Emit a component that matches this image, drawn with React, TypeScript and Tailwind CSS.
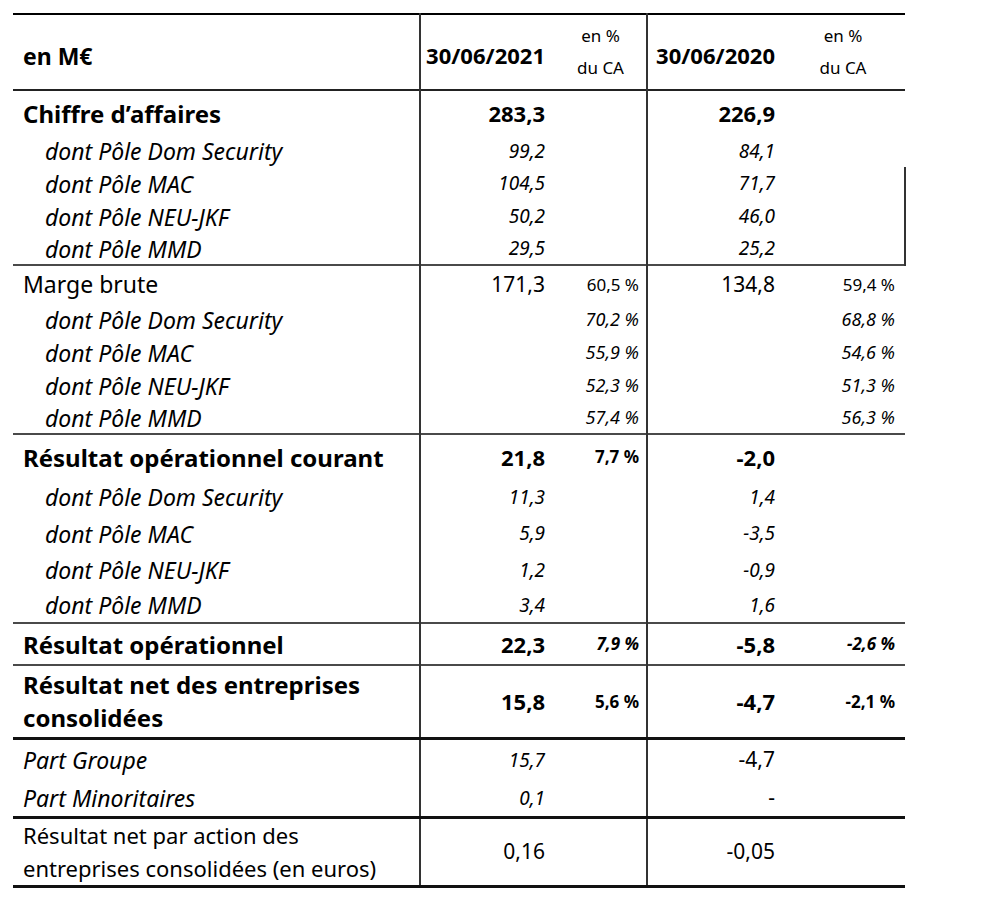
type Row = {
  label: string;
  kind: "main" | "sub" | "plain" | "part";
  v1?: string;
  p1?: string;
  v2?: string;
  p2?: string;
  h: string;
  line?: string;
  edge?: boolean;
  v1i?: boolean;
  pi?: boolean;
  big?: boolean;
};

const thin = "border-b-2 border-b-[#4a4a4a]";
const thick = "border-b-[3px] border-b-[#111]";

const rows: Row[] = [
  { label: "Chiffre d’affaires", kind: "main", v1: "283,3", v2: "226,9", h: "h-[45px]" },
  { label: "dont Pôle Dom Security", kind: "sub", v1: "99,2", v2: "84,1", h: "h-[32px]" },
  { label: "dont Pôle MAC", kind: "sub", v1: "104,5", v2: "71,7", h: "h-[33px]", edge: true },
  { label: "dont Pôle NEU-JKF", kind: "sub", v1: "50,2", v2: "46,0", h: "h-[33px]", edge: true },
  { label: "dont Pôle MMD", kind: "sub", v1: "29,5", v2: "25,2", h: "h-[32px]", edge: true, line: thin },
  { label: "Marge brute", kind: "plain", v1: "171,3", p1: "60,5 %", v2: "134,8", p2: "59,4 %", h: "h-[38px]", big: true },
  { label: "dont Pôle Dom Security", kind: "sub", p1: "70,2 %", p2: "68,8 %", h: "h-[33px]" },
  { label: "dont Pôle MAC", kind: "sub", p1: "55,9 %", p2: "54,6 %", h: "h-[33px]" },
  { label: "dont Pôle NEU-JKF", kind: "sub", p1: "52,3 %", p2: "51,3 %", h: "h-[33px]" },
  { label: "dont Pôle MMD", kind: "sub", p1: "57,4 %", p2: "56,3 %", h: "h-[32px]", line: thin },
  { label: "Résultat opérationnel courant", kind: "main", v1: "21,8", p1: "7,7 %", v2: "-2,0", h: "h-[45px]" },
  { label: "dont Pôle Dom Security", kind: "sub", v1: "11,3", v2: "1,4", h: "h-[36px]" },
  { label: "dont Pôle MAC", kind: "sub", v1: "5,9", v2: "-3,5", h: "h-[37px]" },
  { label: "dont Pôle NEU-JKF", kind: "sub", v1: "1,2", v2: "-0,9", h: "h-[36px]" },
  { label: "dont Pôle MMD", kind: "sub", v1: "3,4", v2: "1,6", h: "h-[35px]", line: thin },
  { label: "Résultat opérationnel", kind: "main", v1: "22,3", p1: "7,9 %", v2: "-5,8", p2: "-2,6 %", h: "h-[42px]", line: thin, pi: true },
  { label: "Résultat net des entreprises\nconsolidées", kind: "main", v1: "15,8", p1: "5,6 %", v2: "-4,7", p2: "-2,1 %", h: "h-[73px]", line: thick },
  { label: "Part Groupe", kind: "part", v1: "15,7", v2: "-4,7", h: "h-[42px]", v1i: true },
  { label: "Part Minoritaires", kind: "part", v1: "0,1", v2: "-", h: "h-[37px]", v1i: true, line: thick },
  { label: "Résultat net par action des\nentreprises consolidées (en euros)", kind: "plain", v1: "0,16", v2: "-0,05", h: "h-[67px]", line: thick },
];

const labelCls = (r: Row) => {
  if (r.kind === "main") return "pl-[10px] font-bold text-[24px] leading-[33px]";
  if (r.kind === "sub") return "pl-[32px] italic text-[23px] leading-[28px]";
  if (r.kind === "part") return "pl-[10px] italic text-[23px] leading-[28px]";
  return `pl-[10px] leading-[33px] ${r.big ? "text-[23px]" : "text-[22px]"}`;
};

const valCls = (r: Row, italic?: boolean) => {
  if (r.kind === "main") return "font-bold text-[22px]";
  if (r.kind === "sub" || italic) return "italic text-[19px]";
  return "text-[21px]";
};

const pctCls = (r: Row) => {
  if (r.kind === "sub") return "italic text-[18px]";
  if (r.kind === "main") return r.pi ? "font-bold italic text-[17px]" : "font-bold text-[17px]";
  return "text-[17px]";
};

export default function App() {
  return (
    <div className="bg-white w-[1000px] h-[904px] pt-[13px] pl-[13px] text-black font-['Noto_Sans','Liberation_Sans',sans-serif]">
      <table className="table-fixed w-[892px] border-collapse">
        <colgroup>
          <col className="w-[407px]" />
          <col className="w-[145px]" />
          <col className="w-[82px]" />
          <col className="w-[148px]" />
          <col className="w-[110px]" />
        </colgroup>
        <thead>
          <tr className="h-[76px] border-t-2 border-t-black border-b-2 border-b-[#222]">
            <th className="text-left pl-[10px] pt-[8px] font-bold text-[23px] border-r-2 border-r-[#333]">en M€</th>
            <th className="text-right pr-[20px] pt-[6px] font-bold text-[22px]">30/06/2021</th>
            <th className="text-center pr-[10px] font-normal text-[17px] leading-[32px] border-r-2 border-r-[#333]">
              en %<br />du CA
            </th>
            <th className="text-right pr-[20px] pt-[6px] font-bold text-[22px]">30/06/2020</th>
            <th className="text-center pr-[14px] font-normal text-[17px] leading-[32px]">
              en %<br />du CA
            </th>
          </tr>
        </thead>
        <tbody>
          {rows.map((r, i) => (
            <tr key={i} className={`${r.h} ${r.line ?? ""}`}>
              <td className={`text-left whitespace-pre-line border-r-2 border-r-[#333] ${labelCls(r)}`}>{r.label}</td>
              <td className={`text-right pr-[20px] ${valCls(r, r.v1i)}`}>{r.v1}</td>
              <td className={`text-right pr-[7px] border-r-2 border-r-[#333] ${pctCls(r)}`}>{r.p1}</td>
              <td className={`text-right pr-[20px] ${valCls(r)}`}>{r.v2}</td>
              <td className={`text-right pr-[10px] ${r.edge ? "border-r-2 border-r-[#333]" : ""} ${pctCls(r)}`}>{r.p2}</td>
            </tr>
          ))}
        </tbody>
      </table>
    </div>
  );
}
